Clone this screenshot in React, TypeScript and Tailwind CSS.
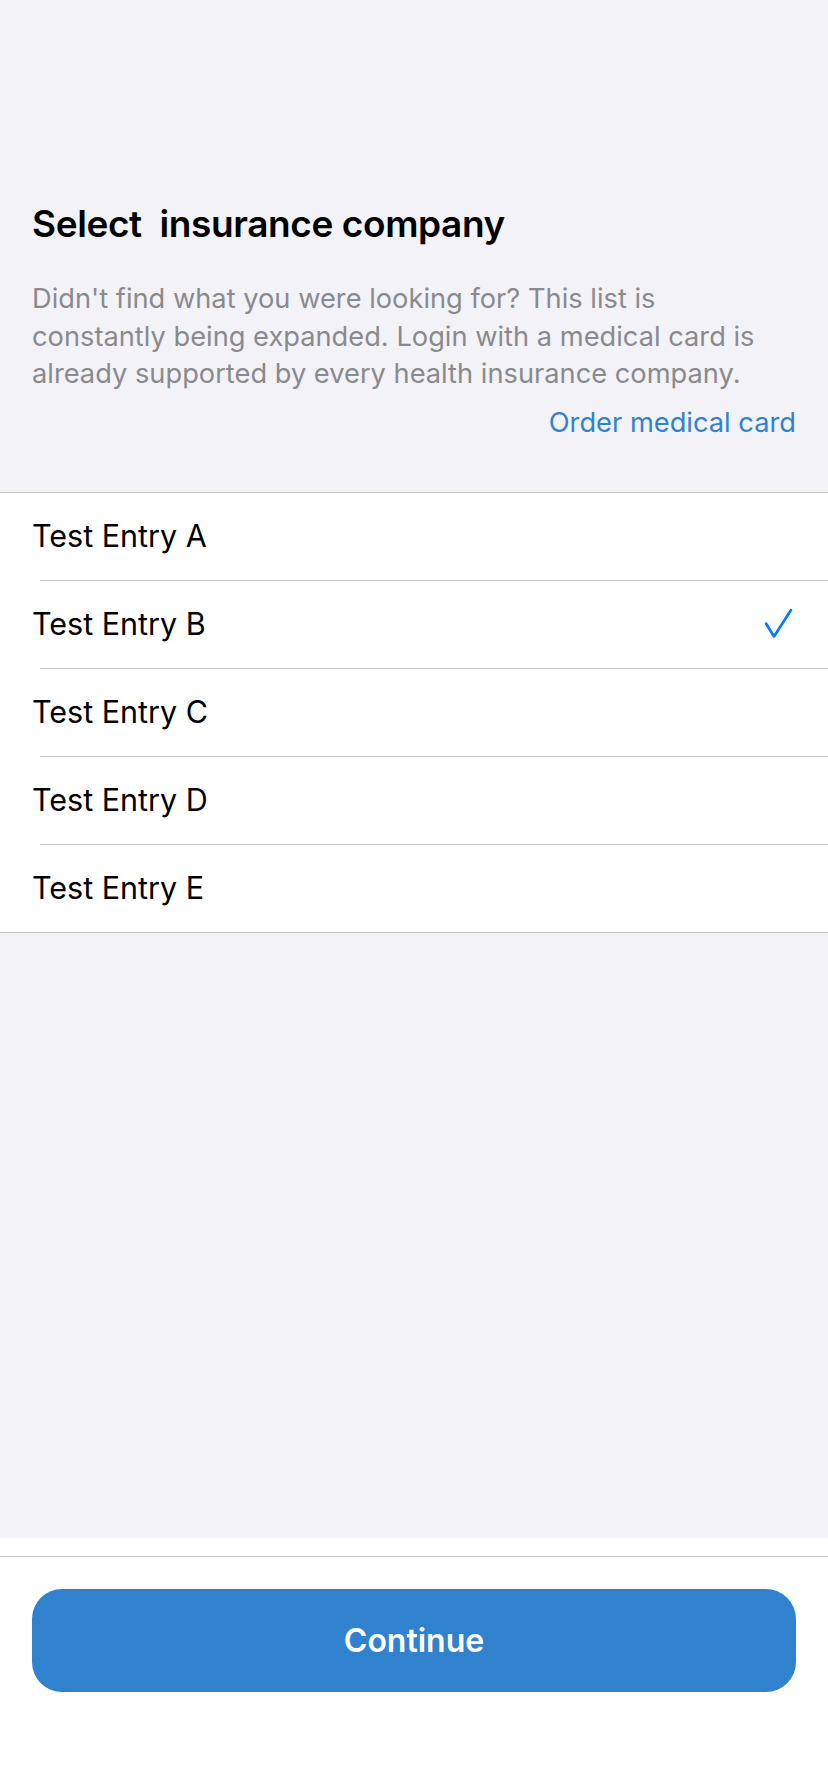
const entries = ['Test Entry A', 'Test Entry B', 'Test Entry C', 'Test Entry D', 'Test Entry E'];

function CheckMark() {
    return (
        <svg width="30" height="32" viewBox="0 0 30 32" fill="none" className="text-[#007aff]">
            <path d="M2 15.5 L10 28.5 L27 2" stroke="currentColor" strokeWidth="2.6" strokeLinecap="round" strokeLinejoin="round" />
        </svg>
    );
}

export default function App() {
    const selected = 'Test Entry B';

    return (
        <div className="w-[828px] h-[1792px] bg-[#f2f2f7] flex flex-col font-['Inter',sans-serif]">
            <section className="px-8 pt-[202px] pb-[51px]">
                <h1 className="text-[37px] leading-[44px] font-semibold text-black tracking-[-0.4px]">Select&nbsp; insurance company</h1>
                <p className="mt-[34px] pr-[6px] text-[27.25px] leading-[37.5px] text-[#8a8a8e]">
                    Didn't find what you were looking for? This list is constantly being expanded. Login with a medical card is already supported by every health insurance company.
                </p>
                <div className="mt-[12px] flex justify-end">
                    <a className="text-[27.25px] leading-[36px] text-[#3182ce]">Order medical card</a>
                </div>
            </section>

            <ul className="bg-white border-y border-[#c6c6c8]">
                {entries.map((entry, i) => (
                    <li key={entry}>
                        {i > 0 && <div className="ml-[40px] h-px bg-[#c6c6c8]" />}
                        <div className="h-[87px] pl-8 pr-[34px] flex items-center justify-between">
                            <span className="text-[30.5px] text-black">{entry}</span>
                            {entry === selected && <CheckMark />}
                        </div>
                    </li>
                ))}
            </ul>

            <div className="grow" />

            <footer className="h-[254px] bg-white pt-[18px]">
                <div className="h-px bg-[#c6c6c8]" />
                <div className="px-8 pt-[32px]">
                    <button className="w-full h-[103px] rounded-[30px] bg-[#3182ce] text-white text-[32px] font-semibold">
                        Continue
                    </button>
                </div>
            </footer>
        </div>
    );
}
